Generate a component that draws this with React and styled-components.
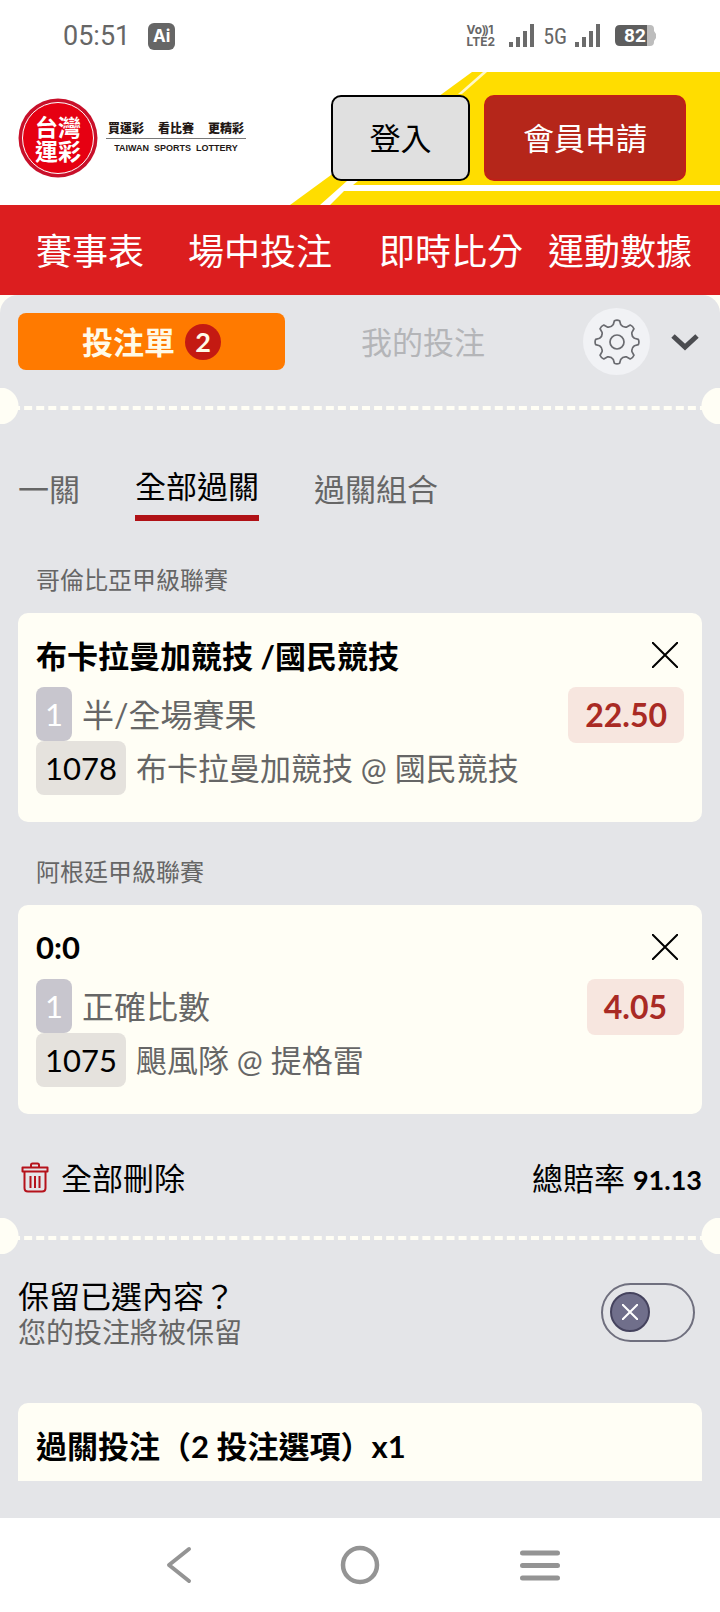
import React from 'react';
import styled, { createGlobalStyle } from 'styled-components';

const GlobalStyle = createGlobalStyle`
  body {
    margin: 0;
    background: #fff;
    font-family: Lato, 'Noto Sans CJK TC', sans-serif;
    color: #000;
  }

  *, *::before, *::after {
    box-sizing: border-box;
  }
`;

const NAV_LINKS = ['賽事表', '場中投注', '即時比分', '運動數據'];

const TABS = ['一關', '全部過關', '過關組合'];

const BETS = [
  {
    league: '哥倫比亞甲級聯賽',
    pick: '布卡拉曼加競技 /國民競技',
    market: '半/全場賽果',
    code: '1078',
    match: '布卡拉曼加競技 @ 國民競技',
    odds: '22.50',
  },
  {
    league: '阿根廷甲級聯賽',
    pick: '0:0',
    market: '正確比數',
    code: '1075',
    match: '颶風隊 @ 提格雷',
    odds: '4.05',
  },
];

const Signal = () => (
  <svg width="26" height="24" viewBox="0 0 26 24" fill="#6b6b6b" aria-hidden="true">
    <rect x="0" y="18" width="4" height="5" />
    <rect x="7" y="13" width="4" height="10" />
    <rect x="14" y="7" width="4" height="16" />
    <rect x="21" y="0" width="4" height="23" />
  </svg>
);

const Battery = () => (
  <svg width="42" height="22" viewBox="0 0 42 22" role="img" aria-label="82">
    <path d="M32 0h3q4 0 4 4v2l2 3v4l-2 3v1q0 4-4 4h-3z" fill="#bdbdbd" />
    <path d="M5 0h27v21H5q-5 0-5-5V5q0-5 5-5z" fill="#5e5e5e" />
    <text
      x="20"
      y="17"
      textAnchor="middle"
      fontFamily="Roboto, sans-serif"
      fontSize="19"
      fontWeight="700"
      fill="#fff"
    >
      82
    </text>
  </svg>
);

// two rows of white characters on the red seal
const Logo = () => (
  <svg width="80" height="80" viewBox="0 0 80 80" role="img" aria-label="台灣運彩">
    <circle cx="40" cy="40" r="39.5" fill="#c8102a" />
    <circle cx="40" cy="40" r="35.5" fill="#e60012" stroke="#fff" strokeWidth="1" />
    <g
      fill="#fff"
      fontFamily="'Noto Sans CJK TC', sans-serif"
      fontSize="23"
      fontWeight="700"
      textAnchor="middle"
    >
      <text x="40" y="38">台灣</text>
      <text x="40" y="62">運彩</text>
    </g>
  </svg>
);

function gearPath(c, teeth) {
  const points = [];
  const step = 360 / teeth;
  const at = (r, deg) => {
    const a = ((deg - 90) * Math.PI) / 180;
    return `${(c + r * Math.cos(a)).toFixed(2)} ${(c + r * Math.sin(a)).toFixed(2)}`;
  };
  for (let i = 0; i < teeth; i++) {
    const mid = i * step;
    points.push(
      `${i ? 'L' : 'M'}${at(21.5, mid - 7)}`,
      `Q${at(22.5, mid)} ${at(21.5, mid + 7)}`,
      `L${at(17.8, mid + 12)}`,
      `Q${at(15.4, mid + step / 2)} ${at(17.8, mid + step - 12)}`
    );
  }
  return `${points.join('')}Z`;
}

const Gear = () => (
  <svg width="46" height="46" viewBox="0 0 46 46" fill="none" stroke="#6a6b70" strokeWidth="1.7" aria-hidden="true">
    <circle cx="23" cy="23" r="7" />
    <path d={gearPath(23, 8)} strokeLinejoin="round" />
  </svg>
);

const Chevron = () => (
  <svg width="28" height="18" viewBox="0 0 28 18" fill="none" stroke="#4b4c50" strokeWidth="5" aria-hidden="true">
    <path d="M2 3l12 11L26 3" />
  </svg>
);

const Cross = ({ size }) => (
  <svg width={size} height={size} viewBox="0 0 26 26" fill="none" stroke="currentColor" strokeWidth={52 / size} aria-hidden="true">
    <path d="M0 0l26 26M26 0L0 26" />
  </svg>
);

const Trash = () => (
  <svg width="28" height="31" viewBox="0 0 28 31" fill="none" stroke="#b5121b" strokeWidth="2" aria-hidden="true">
    <path d="M1.5 5.5h25v4h-25zM10 5.5V3q0-1.5 1.5-1.5h5q1.5 0 1.5 1.5v2.5" strokeLinejoin="round" />
    <path d="M3.5 9.5V26q0 3.5 3.5 3.5h14q3.5 0 3.5-3.5V9.5M9.5 14v12M14 14v12M18.5 14v12" />
  </svg>
);

const HeaderArt = () => (
  <Art viewBox="280 72 440 133" preserveAspectRatio="xMaxYMax meet" aria-hidden="true">
    <path d="M290 205L472 72H720V205z" fill="#ffdd00" />
    <path d="M320 205L347 181H358L353 185H720V191H344L330 205z" fill="#fff" />
    <path d="M483 72h4L462 94h-4z" fill="#fff8c8" />
  </Art>
);

export default function App() {
  return (
    <>
      <GlobalStyle />
      <StatusBar>
        <Clock>05:51</Clock>
        <AiBadge>Ai</AiBadge>
        <Spacer />
        <Volte>
          <span>Vo⸩1</span>
          <span>LTE2</span>
        </Volte>
        <Signal />
        <Network>5G</Network>
        <Signal />
        <Battery />
      </StatusBar>

      <Header>
        <HeaderArt />
        <Brand href="#home">
          <Logo />
          <Slogan>
            <SloganZh>
              <span>買運彩</span>
              <span>看比賽</span>
              <span>更精彩</span>
            </SloganZh>
            <SloganEn>TAIWAN&nbsp; SPORTS&nbsp; LOTTERY</SloganEn>
          </Slogan>
        </Brand>
        <LoginButton>登入</LoginButton>
        <JoinButton>會員申請</JoinButton>
      </Header>

      <MainNav>
        {NAV_LINKS.map(label => (
          <NavLink key={label} href="#nav">
            {label}
          </NavLink>
        ))}
      </MainNav>

      <Backdrop>
        <Panel>
          <SlipBar>
            <SlipButton>
              <Raised>投注單</Raised>
              <Count>2</Count>
            </SlipButton>
            <MyBetsButton>
              <Raised>我的投注</Raised>
            </MyBetsButton>
            <GearButton aria-label="設定">
              <Gear />
            </GearButton>
            <PlainButton aria-label="收合">
              <Chevron />
            </PlainButton>
          </SlipBar>

          <Perforation />

          <TabList role="tablist">
            {TABS.map((label, i) => (
              <Tab key={label} role="tab" aria-selected={i === 1} $active={i === 1}>
                {label}
              </Tab>
            ))}
          </TabList>

          {BETS.map(bet => (
            <Bet key={bet.code}>
              <League>{bet.league}</League>
              <BetCard>
                <BetHead>
                  <Pick>{bet.pick}</Pick>
                  <CloseButton aria-label="移除">
                    <Cross size={26} />
                  </CloseButton>
                </BetHead>
                <BetBody>
                  <div>
                    <BetLine>
                      <Tag $muted>1</Tag>
                      <Market>{bet.market}</Market>
                    </BetLine>
                    <BetLine>
                      <Tag>{bet.code}</Tag>
                      <Raised>{bet.match}</Raised>
                    </BetLine>
                  </div>
                  <Odds>{bet.odds}</Odds>
                </BetBody>
              </BetCard>
            </Bet>
          ))}

          <Summary>
            <ClearButton>
              <Trash />
              <Raised>全部刪除</Raised>
            </ClearButton>
            <Raised>
              總賠率 <Total>91.13</Total>
            </Raised>
          </Summary>

          <Perforation />

          <KeepRow>
            <label htmlFor="keep">
              <KeepTitle>保留已選內容？</KeepTitle>
              <KeepHint>您的投注將被保留</KeepHint>
            </label>
            <Toggle>
              <input id="keep" type="checkbox" />
              <Knob>
                <Cross size={16} />
              </Knob>
            </Toggle>
          </KeepRow>

          <StakeCard>過關投注（2 投注選項）x1</StakeCard>
        </Panel>
      </Backdrop>

      <SystemBar>
        <PlainButton aria-label="返回">
          <svg width="40" height="40" viewBox="0 0 40 40" fill="none" stroke="#949494" strokeWidth="4" strokeLinecap="round" strokeLinejoin="round">
            <path d="M29 4L9 20l20 16" />
          </svg>
        </PlainButton>
        <PlainButton aria-label="主畫面">
          <svg width="40" height="40" viewBox="0 0 40 40" fill="none" stroke="#949494" strokeWidth="4.5">
            <circle cx="20" cy="20" r="17" />
          </svg>
        </PlainButton>
        <PlainButton aria-label="最近">
          <svg width="40" height="40" viewBox="0 0 40 40" stroke="#949494" strokeWidth="5" strokeLinecap="round">
            <path d="M2.5 8h35M2.5 20.5h35M2.5 33h35" />
          </svg>
        </PlainButton>
      </SystemBar>
    </>
  );
}

const StatusBar = styled.div`
  display: flex;
  align-items: center;
  height: 72px;
  padding: 0 63px;
  color: #666;
`;

const Clock = styled.span`
  font-family: Roboto, sans-serif;
  font-size: 27px;
`;

const AiBadge = styled.span`
  width: 27px;
  margin-left: 18px;
  border-radius: 6px;
  background: #666;
  color: #fff;
  font: 700 17px/27px Inter, sans-serif;
  text-align: center;
`;

const Spacer = styled.span`
  flex: 1;
`;

const Volte = styled.span`
  display: flex;
  flex-direction: column;
  margin-right: 14px;
  font: 700 12px/12px Inter, sans-serif;
`;

const Network = styled.span`
  margin: 0 8px;
  font-family: 'Roboto Condensed', Roboto, sans-serif;
  font-size: 22px;

  & + svg {
    margin-right: 14px;
  }
`;

const Header = styled.header`
  position: relative;
  display: flex;
  align-items: center;
  height: 133px;
  padding: 0 34px 2px 18px;
`;

const Art = styled.svg`
  position: absolute;
  right: 0;
  bottom: 0;
  height: 100%;
  z-index: -1;
`;

const Brand = styled.a`
  display: flex;
  flex: 1;
  align-items: center;
  gap: 8px;
  color: #231815;
  text-decoration: none;
`;

const Slogan = styled.span`
  width: 140px;
`;

const SloganZh = styled.span`
  display: flex;
  justify-content: space-between;
  padding: 0 2px;
  border-bottom: 1px solid #777;
  font: 900 12px/20px 'Noto Sans CJK TC', sans-serif;
`;

const SloganEn = styled.span`
  display: block;
  font: 700 9px/18px 'Liberation Sans', sans-serif;
  text-align: center;
  white-space: nowrap;
`;

const HeaderButton = styled.button`
  height: 86px;
  padding-bottom: 4px;
  border-radius: 10px;
  font-family: inherit;
  font-size: 31px;
  cursor: pointer;
`;

const LoginButton = styled(HeaderButton)`
  width: 139px;
  margin-right: 14px;
  border: 2px solid #000;
  background: #e0e0e0;
  color: #000;
`;

const JoinButton = styled(HeaderButton)`
  width: 202px;
  border: 2px solid #c02018;
  background: #b5261a;
  color: #fff;
`;

const MainNav = styled.nav`
  display: grid;
  grid-template-columns: 152fr 191fr 169fr 145fr;
  align-items: center;
  height: 90px;
  padding: 0 27px 2px 36px;
  background: #dc1e1f;
`;

const NavLink = styled.a`
  color: #fff;
  font-size: 36px;
  text-decoration: none;
  white-space: nowrap;
`;

const Backdrop = styled.div`
  background: #fffef5;
`;

const Panel = styled.main`
  padding: 13px 0 37px;
  border-radius: 18px 18px 0 0;
  background: #e4e5e8;
`;

const Raised = styled.span`
  padding-bottom: 3px;
`;

const SlipBar = styled.div`
  display: flex;
  align-items: center;
  padding: 0 21px 0 18px;
`;

const SlipButton = styled.button`
  display: flex;
  align-items: center;
  justify-content: center;
  gap: 10px;
  flex: 0 0 267px;
  height: 57px;
  border: 0;
  border-radius: 8px;
  background: #ff7a00;
  color: #fffae8;
  font: inherit;
  font-size: 31px;
  font-weight: 700;
`;

const Count = styled.span`
  width: 36px;
  border-radius: 50%;
  background: #c41a12;
  font-size: 27px;
  line-height: 36px;
`;

const PlainButton = styled.button`
  display: flex;
  padding: 0;
  border: 0;
  background: none;
  color: inherit;
  font: inherit;
  cursor: pointer;
`;

const MyBetsButton = styled(PlainButton)`
  flex: 1;
  justify-content: center;
  margin-right: 22px;
  color: #b4b5b8;
  font-size: 31px;
`;

const GearButton = styled(PlainButton)`
  align-items: center;
  justify-content: center;
  width: 67px;
  height: 67px;
  margin-right: 21px;
  border-radius: 50%;
  background: #f1f2f5;
`;

const Perforation = styled.div`
  position: relative;
  height: 36px;
  margin-top: 13px;
  overflow: hidden;

  &::before {
    content: '';
    position: absolute;
    top: 18px;
    left: 0;
    right: 0;
    border-top: 4px dashed #fffef5;
  }

  &::after {
    content: '';
    position: absolute;
    inset: 0;
    background: radial-gradient(circle at 0 50%, #fffef5 18px, transparent 19px),
      radial-gradient(circle at 100% 50%, #fffef5 18px, transparent 19px);
  }
`;

const TabList = styled.div`
  display: flex;
  align-items: flex-start;
  gap: 55px;
  padding: 36px 18px 0;
`;

const Tab = styled(PlainButton)`
  padding: ${p => (p.$active ? '2px 0 4px' : '5px 0 0')};
  border-bottom: ${p => (p.$active ? '6px solid #b01116' : '0')};
  color: ${p => (p.$active ? '#000' : '#666')};
  font-size: 31px;
  line-height: 49px;
`;

const Bet = styled.section`
  padding: 36px 18px 0;

  & + & {
    padding-top: 27px;
  }
`;

const League = styled.h3`
  margin: 0;
  padding: 5px 18px 15px;
  color: #666;
  font-size: 24px;
  font-weight: 400;
  line-height: 36px;
`;

const Card = styled.div`
  padding: 18px;
  border-radius: 10px;
  background: #fffef5;
`;

const BetCard = styled(Card)`
  padding-bottom: 27px;
`;

const BetHead = styled.div`
  display: flex;
  align-items: center;
  justify-content: space-between;
  height: 56px;
  padding-bottom: 9px;
`;

const Pick = styled.strong`
  font-size: 31px;
`;

const CloseButton = styled(PlainButton)`
  margin-right: 6px;
`;

const BetBody = styled.div`
  display: flex;
  align-items: flex-start;
  justify-content: space-between;
`;

const BetLine = styled.div`
  display: flex;
  align-items: center;
  gap: 10px;
  color: #666;
  font-size: 31px;
`;

const Tag = styled.span`
  padding: 0 9px;
  border-radius: 8px;
  background: ${p => (p.$muted ? '#c8c6ce' : '#e5e2dd')};
  color: ${p => (p.$muted ? '#fff' : '#000')};
  line-height: 54px;
`;

const Market = styled(Raised)`
  font-size: 32px;
`;

const Odds = styled.strong`
  padding: 0 17px;
  border-radius: 8px;
  background: #f7e6df;
  color: #a92a24;
  font-size: 32px;
  line-height: 56px;
`;

const Summary = styled.div`
  display: flex;
  align-items: center;
  justify-content: space-between;
  height: 91px;
  padding: 36px 18px 0;
  font-size: 31px;
`;

const ClearButton = styled(PlainButton)`
  align-items: center;
  gap: 12px;
  padding-left: 3px;
`;

const Total = styled.strong`
  font-size: 27px;
`;

const KeepRow = styled.div`
  display: flex;
  align-items: center;
  justify-content: space-between;
  padding: 22px 25px 0 18px;
`;

const KeepTitle = styled.div`
  font-size: 31px;
  line-height: 40px;
`;

const KeepHint = styled.div`
  color: #666;
  font-size: 28px;
  line-height: 32px;
`;

const Toggle = styled.div`
  position: relative;
  width: 94px;
  height: 59px;
  padding: 7px;
  border: 2px solid #6f6f7e;
  border-radius: 30px;

  input {
    position: absolute;
    inset: 0;
    width: 100%;
    height: 100%;
    margin: 0;
    opacity: 0;
  }
`;

const Knob = styled.span`
  display: flex;
  align-items: center;
  justify-content: center;
  width: 40px;
  height: 40px;
  border: 2px solid #45435e;
  border-radius: 50%;
  background: #706f8b;
  color: #fff;
`;

const StakeCard = styled(Card)`
  margin: 55px 18px 0;
  border-radius: 10px 10px 0 0;
  padding: 21px 18px 12px;
  font-size: 31px;
  font-weight: 700;
  line-height: 45px;
`;

const SystemBar = styled.footer`
  display: flex;
  align-items: center;
  justify-content: space-around;
  height: 94px;
  padding: 0 90px;
  background: #fff;
`;
